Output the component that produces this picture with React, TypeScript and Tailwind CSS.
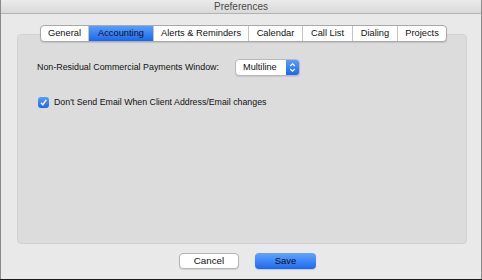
import React from "react";

const tabs = ["General", "Accounting", "Alerts & Reminders", "Calendar", "Call List", "Dialing", "Projects"];
const widths = [47, 65, 95, 54, 50, 45, 49];

export default function App() {
  return (
    <div
      className="w-[482px] h-[280px] bg-[#1a1a1a] overflow-hidden"
      style={{ fontFamily: '"Liberation Sans", Arial, sans-serif' }}
    >
      <div className="w-[482px] h-[279px] flex flex-col bg-[#e9e9e9] border-l border-r border-[#8a8a8a]">
        <div className="h-[14px] shrink-0 flex items-center justify-center bg-gradient-to-b from-[#ebebeb] to-[#d9d9d9] border-b border-[#b3b3b3] text-[10px] leading-none text-[#4a4a4a]">
          Preferences
        </div>
        <div className="flex flex-col items-start">
          <div className="relative z-10 mt-[11px] ml-[39px] flex h-[17px] rounded-[4px] border border-[#a9a9a9] bg-white shadow-[0_1px_1px_rgba(0,0,0,0.12)] overflow-hidden">
            {tabs.map((t, i) => (
              <div
                key={t}
                style={{ width: widths[i] }}
                className={
                  "flex items-center justify-center text-[9.3px] leading-none " +
                  (i > 0 ? "border-l border-[#c4c4c4] " : "") +
                  (i === 1
                    ? "bg-gradient-to-b from-[#5b9cf8] to-[#1a66f0] text-[#0b1020]"
                    : "text-[#111]")
                }
              >
                {t}
              </div>
            ))}
          </div>
          <div className="-mt-[8px] ml-[16px] w-[450px] h-[210px] rounded-[4px] border border-[#d2d2d2] bg-[#dcdcdc] flex flex-col">
            <div className="mt-[24px] ml-[19px] flex items-center">
              <span className="w-[198px] text-[8.9px] text-[#111] leading-none">Non-Residual Commercial Payments Window:</span>
              <div className="flex h-[17px] w-[65px] rounded-[4px] border border-[#b9b9b9] bg-white overflow-hidden shadow-[0_1px_1px_rgba(0,0,0,0.1)]">
                <div className="flex-1 flex items-center pl-[7px] text-[9.2px] leading-none text-[#111]">Multiline</div>
                <div className="w-[13px] flex items-center justify-center bg-gradient-to-b from-[#5b9cf8] to-[#1a66f0]">
                  <svg width="7" height="11" viewBox="0 0 7 11">
                    <path d="M1.2 4 L3.5 1.8 L5.8 4" fill="none" stroke="white" strokeWidth="1.2" />
                    <path d="M1.2 7 L3.5 9.2 L5.8 7" fill="none" stroke="white" strokeWidth="1.2" />
                  </svg>
                </div>
              </div>
            </div>
            <div className="mt-[21px] ml-[20px] flex items-center">
              <div className="w-[11px] h-[11px] rounded-[3px] bg-gradient-to-b from-[#5b9cf8] to-[#1a66f0] flex items-center justify-center">
                <svg width="9" height="9" viewBox="0 0 9 9">
                  <path d="M2 4.8 L3.8 6.8 L7.2 1.8" fill="none" stroke="white" strokeWidth="1.4" />
                </svg>
              </div>
              <span className="ml-[5px] text-[8.8px] leading-none text-[#111]">
                Don't Send Email When Client Address/Email changes
              </span>
            </div>
          </div>
          <div className="mt-[9px] ml-[178px] flex gap-[16px]">
            <div className="w-[60px] h-[16px] rounded-[4px] border border-[#b5b5b5] bg-white flex items-center justify-center text-[9.8px] leading-none text-[#111] shadow-[0_1px_1px_rgba(0,0,0,0.1)]">
              Cancel
            </div>
            <div className="w-[61px] h-[16px] rounded-[4px] bg-gradient-to-b from-[#62a3fa] to-[#1a68f2] flex items-center justify-center text-[9.5px] leading-none text-[#0b1020] shadow-[0_1px_1px_rgba(0,0,0,0.15)]">
              Save
            </div>
          </div>
        </div>
      </div>
    </div>
  );
}
